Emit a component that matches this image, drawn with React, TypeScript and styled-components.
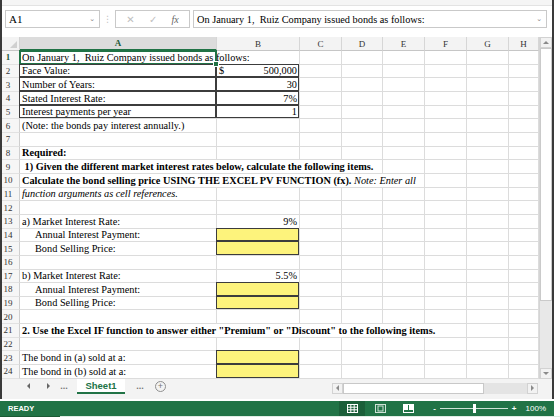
import React from 'react'
import styled, { createGlobalStyle, css } from 'styled-components'

const GlobalStyle = createGlobalStyle`
  html, body {
    margin: 0;
    padding: 0;
    background: #fff;
  }
  body {
    font-family: 'Liberation Serif', 'Times New Roman', serif;
    color: #000;
  }
`

const green = '#217346'
const COLS = [197, 83, 42, 41, 42, 42, 42, 30]
const LETTERS = ['A', 'B', 'C', 'D', 'E', 'F', 'G', 'H']

const Window = styled.div`
  width: 550px;
  border-left: 2px solid #3a3a3a;
  border-right: 2px solid #3a3a3a;
  background: #fff;
`

const TopStrip = styled.div`
  height: 5px;
  background: #f5f5f5;
  border-bottom: 1px solid #e3e3e3;
`

const FormulaBar = styled.div`
  height: 31px;
  box-sizing: border-box;
  padding: 4px 5px 9px 3px;
  display: flex;
  align-items: stretch;
`

const Box = styled.div<{ $w?: number }>`
  box-sizing: border-box;
  border: 1px solid #c9c9c9;
  background: #fff;
  display: flex;
  align-items: center;
  font-size: 11px;
  ${(p) => (p.$w ? `width: ${p.$w}px;` : 'flex: 1; margin-left: 3px;')}
`

const NameText = styled.span`
  flex: 1;
  padding-left: 3px;
`

const Chevron = styled.span`
  color: #888;
  font-family: 'DejaVu Sans', sans-serif;
  font-size: 7px;
  padding-right: 4px;
`

const Dots = styled.div`
  width: 15px;
  color: #c4c4c4;
  font-family: 'DejaVu Sans', sans-serif;
  font-size: 9px;
  display: flex;
  align-items: center;
  justify-content: center;
`

const FnIcons = styled.div`
  flex: 1;
  display: flex;
  justify-content: space-around;
  align-items: center;
  color: #c0c0c0;
  font-family: 'DejaVu Sans', sans-serif;
  font-size: 10px;
  padding: 0 3px;
`

const Fx = styled.span`
  font-family: 'Liberation Serif', serif;
  font-style: italic;
  color: #666;
  font-size: 10px;
`

const FormulaText = styled.span`
  flex: 1;
  white-space: pre;
  padding-left: 3px;
  font-size: 10.3px;
`

const SheetArea = styled.div`
  display: flex;
`

const Grid = styled.div`
  display: grid;
  grid-template-columns: 18px ${COLS.map((c) => `${c}px`).join(' ')};
  grid-template-rows: 14px repeat(24, 13.667px);
`

const Corner = styled.div`
  box-sizing: border-box;
  background: #f3f3f3;
  border-right: 1px solid #d2d2d2;
  border-bottom: 1px solid #c6c6c6;
  display: flex;
  align-items: flex-end;
  justify-content: flex-end;
  padding: 0 2px 2px 0;
  &::after {
    content: '';
    width: 0;
    height: 0;
    border-left: 7px solid transparent;
    border-bottom: 7px solid #d0d0d0;
  }
`

const ColHead = styled.div<{ $active?: boolean }>`
  box-sizing: border-box;
  background: ${(p) => (p.$active ? '#dcdcdc' : '#f3f3f3')};
  border-right: 1px solid #d6d6d6;
  border-bottom: ${(p) => (p.$active ? `2px solid ${green}` : '1px solid #c6c6c6')};
  color: ${(p) => (p.$active ? '#1f5a37' : '#333')};
  font-weight: ${(p) => (p.$active ? 'bold' : 'normal')};
  font-size: 9px;
  display: flex;
  align-items: center;
  justify-content: center;
`

const RowHead = styled.div<{ $active?: boolean }>`
  box-sizing: border-box;
  background: #f6f6f6;
  border-right: 1px solid #cfcfcf;
  border-bottom: 1px solid #e2e2e2;
  color: ${(p) => (p.$active ? '#1f5a37' : '#333')};
  font-weight: ${(p) => (p.$active ? 'bold' : 'normal')};
  font-size: 9px;
  display: flex;
  align-items: center;
  justify-content: center;
  padding-right: 5px;
`

type Align = 'left' | 'right' | 'split'

const Cell = styled.div<{
  $span: number
  $align: Align
  $bold?: boolean
  $italic?: boolean
  $fill?: boolean
  $boxed?: boolean
  $indent?: number
  $selected?: boolean
}>`
  grid-column: span ${(p) => p.$span};
  position: relative;
  box-sizing: border-box;
  border-right: 1px solid #dcdcdc;
  border-bottom: 1px solid #dcdcdc;
  background: ${(p) => (p.$fill ? '#fdf37c' : 'transparent')};
  font-size: 10.3px;
  line-height: 12px;
  font-weight: ${(p) => (p.$bold ? 'bold' : 'normal')};
  font-style: ${(p) => (p.$italic ? 'italic' : 'normal')};
  white-space: pre;
  display: flex;
  align-items: flex-end;
  justify-content: ${(p) =>
    p.$align === 'right' ? 'flex-end' : p.$align === 'split' ? 'space-between' : 'flex-start'};
  padding: 0 2px 0 ${(p) => 2 + (p.$indent ?? 0)}px;
  ${(p) =>
    p.$boxed &&
    css`
      &::after {
        content: '';
        position: absolute;
        top: -1px;
        left: -1px;
        right: 0;
        bottom: 0;
        border: 1px solid #3c3c3c;
        pointer-events: none;
      }
    `}
  ${(p) =>
    p.$selected &&
    css`
      &::after {
        content: '';
        position: absolute;
        top: -1px;
        left: -1px;
        right: -1px;
        bottom: -1px;
        border: 2px solid ${green};
        pointer-events: none;
      }
      &::before {
        content: '';
        position: absolute;
        right: -3px;
        bottom: -3px;
        width: 4px;
        height: 4px;
        background: ${green};
        border: 1px solid #fff;
        z-index: 2;
      }
    `}
`

const VScroll = styled.div`
  width: 13px;
  box-sizing: border-box;
  background: #e8e8e8;
  border-left: 1px solid #d4d4d4;
  display: flex;
  flex-direction: column;
`

const ScrollBtn = styled.div<{ $w?: number }>`
  box-sizing: border-box;
  ${(p) => (p.$w ? `width: ${p.$w}px;` : 'height: 11px;')}
  background: #f2f2f2;
  border: 1px solid #d2d2d2;
  display: flex;
  align-items: center;
  justify-content: center;
`

const Tri = styled.span<{ $dir: 'up' | 'down' | 'left' | 'right'; $c?: string }>`
  width: 0;
  height: 0;
  ${(p) => {
    const c = p.$c ?? '#8a8a8a'
    if (p.$dir === 'up') return `border-left: 3px solid transparent; border-right: 3px solid transparent; border-bottom: 3px solid ${c};`
    if (p.$dir === 'down') return `border-left: 3px solid transparent; border-right: 3px solid transparent; border-top: 3px solid ${c};`
    if (p.$dir === 'left') return `border-top: 3px solid transparent; border-bottom: 3px solid transparent; border-right: 3px solid ${c};`
    return `border-top: 3px solid transparent; border-bottom: 3px solid transparent; border-left: 3px solid ${c};`
  }}
`

const VThumb = styled.div`
  height: 253px;
  box-sizing: border-box;
  background: #fff;
  border: 1px solid #cacaca;
`

const Spacer = styled.div`
  flex: 1;
`

const TabBar = styled.div`
  height: 20px;
  box-sizing: border-box;
  background: #f3f3f3;
  display: flex;
  align-items: flex-start;
  font-family: 'Liberation Sans', Arial, sans-serif;
`

const Nav = styled.div`
  display: flex;
  align-items: center;
  height: 15px;
  padding-left: 21px;
  gap: 0;
`

const NavItem = styled.div<{ $w: number }>`
  width: ${(p) => p.$w}px;
  display: flex;
  justify-content: center;
  align-items: center;
  color: #777;
  font-size: 9px;
  font-weight: bold;
`

const SheetTab = styled.div`
  width: 48px;
  height: 15px;
  box-sizing: border-box;
  background: #fff;
  border-bottom: 2px solid ${green};
  color: ${green};
  font-weight: bold;
  font-size: 9.5px;
  display: flex;
  align-items: center;
  justify-content: center;
  margin-left: 6px;
`

const AddBtn = styled.div`
  width: 9px;
  height: 9px;
  border: 1px solid #8f8f8f;
  border-radius: 50%;
  color: #777;
  font-size: 9px;
  line-height: 9px;
  text-align: center;
  margin-left: 8px;
`

const HScroll = styled.div`
  display: flex;
  height: 11px;
  width: 206px;
  margin-top: 4px;
  margin-right: 14px;
  background: #e4e4e4;
`

const HThumb = styled.div`
  width: 141px;
  box-sizing: border-box;
  background: #fff;
  border: 1px solid #c8c8c8;
`

const StatusBar = styled.div`
  width: 554px;
  height: 15px;
  margin-top: 2px;
  background: ${green};
  display: flex;
  align-items: center;
  color: #fff;
  font-family: 'Liberation Sans', Arial, sans-serif;
`

const Ready = styled.span`
  font-size: 7.5px;
  font-weight: bold;
  padding-left: 8px;
  flex: 1;
`

const ViewBtn = styled.div<{ $on?: boolean }>`
  width: 26px;
  height: 15px;
  display: flex;
  align-items: center;
  justify-content: center;
  background: ${(p) => (p.$on ? '#1b5f39' : 'transparent')};
  margin-right: 2px;
`

const Zoom = styled.div`
  display: flex;
  align-items: center;
  margin-left: 10px;
  font-size: 8px;
  font-weight: bold;
`

const Track = styled.div`
  position: relative;
  width: 68px;
  height: 1px;
  background: #cfe2d6;
  margin: 0 4px;
`

const Knob = styled.div`
  position: absolute;
  left: 33px;
  top: -4px;
  width: 3px;
  height: 9px;
  background: #fff;
`

const Pct = styled.span`
  margin-left: 9px;
  margin-right: 8px;
  font-weight: normal;
  font-size: 8px;
`

const Foot = styled.div`
  display: flex;
  height: 3px;
  background: #dfece4;
  &::before {
    content: '';
    width: 60px;
    background: #1a5a35;
  }
`

type CellDef = {
  t?: React.ReactNode
  split?: [string, string]
  span?: number
  align?: Align
  bold?: boolean
  italic?: boolean
  fill?: boolean
  boxed?: boolean
  indent?: number
  sel?: boolean
}

const input: CellDef = { fill: true, boxed: true }

const rows: CellDef[][] = [
  [{ t: 'On January 1,  Ruiz Company issued bonds as follows:', sel: true }],
  [{ t: 'Face Value:', boxed: true }, { split: ['$', '500,000'], align: 'split', boxed: true }],
  [{ t: 'Number of Years:', boxed: true }, { t: '30', align: 'right', boxed: true }],
  [{ t: 'Stated Interest Rate:', boxed: true }, { t: '7%', align: 'right', boxed: true }],
  [{ t: 'Interest payments per year', boxed: true }, { t: '1', align: 'right', boxed: true }],
  [{ t: '(Note: the bonds pay interest annually.)' }],
  [],
  [{ t: 'Required:', bold: true }],
  [{ t: ' 1) Given the different market interest rates below, calculate the following items.', bold: true, span: 4 }],
  [
    {
      t: (
        <>
          <b>Calculate the bond selling price USING THE EXCEL PV FUNCTION (fx). </b>
          <i>Note: Enter all</i>
        </>
      ),
      span: 5,
    },
  ],
  [{ t: 'function arguments as cell references.', italic: true }],
  [],
  [{ t: 'a) Market Interest Rate:' }, { t: '9%', align: 'right' }],
  [{ t: 'Annual Interest Payment:', indent: 13 }, input],
  [{ t: 'Bond Selling Price:', indent: 13 }, input],
  [],
  [{ t: 'b) Market Interest Rate:' }, { t: '5.5%', align: 'right' }],
  [{ t: 'Annual Interest Payment:', indent: 13 }, input],
  [{ t: 'Bond Selling Price:', indent: 13 }, input],
  [],
  [{ t: '2. Use the Excel IF function to answer either "Premium" or "Discount" to the following items.', bold: true, span: 6 }],
  [],
  [{ t: 'The bond in (a) sold at a:' }, input],
  [{ t: 'The bond in (b) sold at a:' }, input],
]

function fillRow(cells: CellDef[]): CellDef[] {
  const used = cells.reduce((n, c) => n + (c.span ?? 1), 0)
  return [...cells, ...Array.from({ length: 8 - used }, () => ({}))]
}

const GridIcon = () => (
  <svg width="11" height="9" viewBox="0 0 11 9" fill="none" stroke="#fff" strokeWidth="1">
    <rect x="0.5" y="0.5" width="10" height="8" />
    <path d="M0.5 3.2h10M0.5 5.8h10M3.8 0.5v8M7.2 0.5v8" />
  </svg>
)

const PageIcon = () => (
  <svg width="11" height="9" viewBox="0 0 11 9" fill="none" stroke="#cfe2d6" strokeWidth="1">
    <rect x="0.5" y="0.5" width="10" height="8" />
    <rect x="3" y="2" width="5" height="5" />
  </svg>
)

const BreakIcon = () => (
  <svg width="11" height="9" viewBox="0 0 11 9">
    <rect x="0.5" y="0.5" width="10" height="8" fill="none" stroke="#fff" strokeWidth="1" />
    <rect x="1" y="1" width="4" height="5" fill="#fff" />
    <rect x="6" y="1" width="4" height="5" fill="#fff" />
  </svg>
)

export default function App() {
  return (
    <>
      <GlobalStyle />
      <Window>
        <TopStrip />
        <FormulaBar>
          <Box $w={95}>
            <NameText>A1</NameText>
            <Chevron>⌄</Chevron>
          </Box>
          <Dots>⋮</Dots>
          <Box $w={75}>
            <FnIcons>
              <span>✕</span>
              <span>✓</span>
              <Fx>fx</Fx>
            </FnIcons>
          </Box>
          <Box>
            <FormulaText>On January 1,  Ruiz Company issued bonds as follows:</FormulaText>
            <Chevron>⌄</Chevron>
          </Box>
        </FormulaBar>
        <SheetArea>
          <Grid>
            <Corner />
            {LETTERS.map((l, i) => (
              <ColHead key={l} $active={i === 0}>
                {l}
              </ColHead>
            ))}
            {rows.map((r, ri) => (
              <React.Fragment key={ri}>
                <RowHead $active={ri === 0}>{ri + 1}</RowHead>
                {fillRow(r).map((c, ci) => (
                  <Cell
                    key={ci}
                    $span={c.span ?? 1}
                    $align={c.align ?? 'left'}
                    $bold={c.bold}
                    $italic={c.italic}
                    $fill={c.fill}
                    $boxed={c.boxed}
                    $indent={c.indent}
                    $selected={c.sel}
                  >
                    {c.split ? (
                      <>
                        <span>{c.split[0]}</span>
                        <span>{c.split[1]}</span>
                      </>
                    ) : (
                      c.t
                    )}
                  </Cell>
                ))}
              </React.Fragment>
            ))}
          </Grid>
          <VScroll>
            <ScrollBtn>
              <Tri $dir="up" />
            </ScrollBtn>
            <VThumb />
            <Spacer />
            <ScrollBtn>
              <Tri $dir="down" />
            </ScrollBtn>
          </VScroll>
        </SheetArea>
        <TabBar>
          <Nav>
            <NavItem $w={10}>
              <Tri $dir="left" $c="#666" />
            </NavItem>
            <NavItem $w={10} style={{ marginLeft: 10 }}>
              <Tri $dir="right" $c="#666" />
            </NavItem>
            <NavItem $w={14} style={{ marginLeft: 4 }}>
              ...
            </NavItem>
            <SheetTab>Sheet1</SheetTab>
            <NavItem $w={14} style={{ marginLeft: 8 }}>
              ...
            </NavItem>
            <AddBtn>+</AddBtn>
          </Nav>
          <Spacer />
          <HScroll>
            <ScrollBtn $w={11}>
              <Tri $dir="left" />
            </ScrollBtn>
            <HThumb />
            <Spacer />
            <ScrollBtn $w={11}>
              <Tri $dir="right" />
            </ScrollBtn>
          </HScroll>
        </TabBar>
      </Window>
      <StatusBar>
        <Ready>READY</Ready>
        <ViewBtn $on>
          <GridIcon />
        </ViewBtn>
        <ViewBtn>
          <PageIcon />
        </ViewBtn>
        <ViewBtn>
          <BreakIcon />
        </ViewBtn>
        <Zoom>
          <span>-</span>
          <Track>
            <Knob />
          </Track>
          <span>+</span>
          <Pct>100%</Pct>
        </Zoom>
      </StatusBar>
      <Foot />
    </>
  )
}
